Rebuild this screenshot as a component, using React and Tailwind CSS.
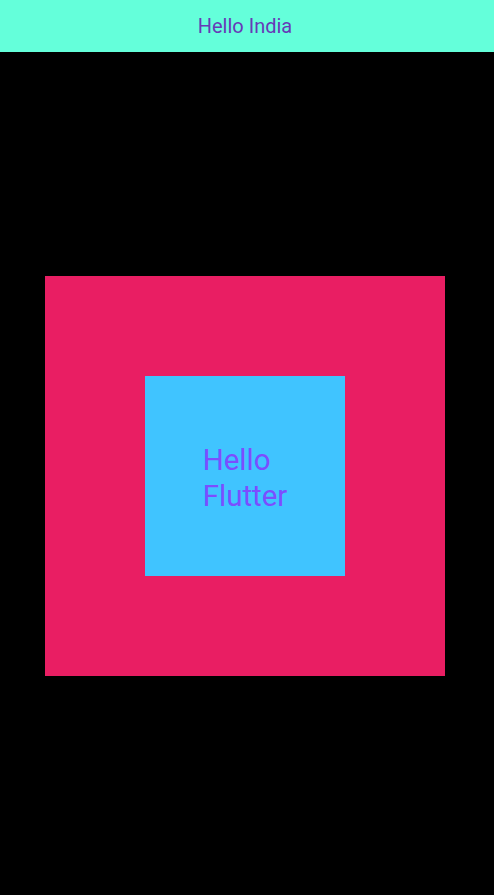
export default function App() {
  return (
    <div className="flex h-[895px] w-[494px] flex-col bg-black pr-[4px] font-['Roboto',sans-serif]">
      <header className="-mr-[4px] flex h-[52px] shrink-0 items-center justify-center bg-[#64FFDA] pr-[4px]">
        <h1 className="text-[20px] font-normal text-[#673AB7]">Hello India</h1>
      </header>
      <main className="flex flex-1 items-center justify-center pt-[5px]">
        <div className="flex h-[400px] w-[400px] items-center justify-center bg-[#E91E63]">
          <div className="flex h-[200px] w-[200px] items-center justify-center bg-[#40C4FF]">
            <p className="pt-[3px] text-left text-[29.5px] leading-[36px] text-[#7C4DFF]">
              Hello
              <br />
              Flutter
            </p>
          </div>
        </div>
      </main>
    </div>
  );
}
